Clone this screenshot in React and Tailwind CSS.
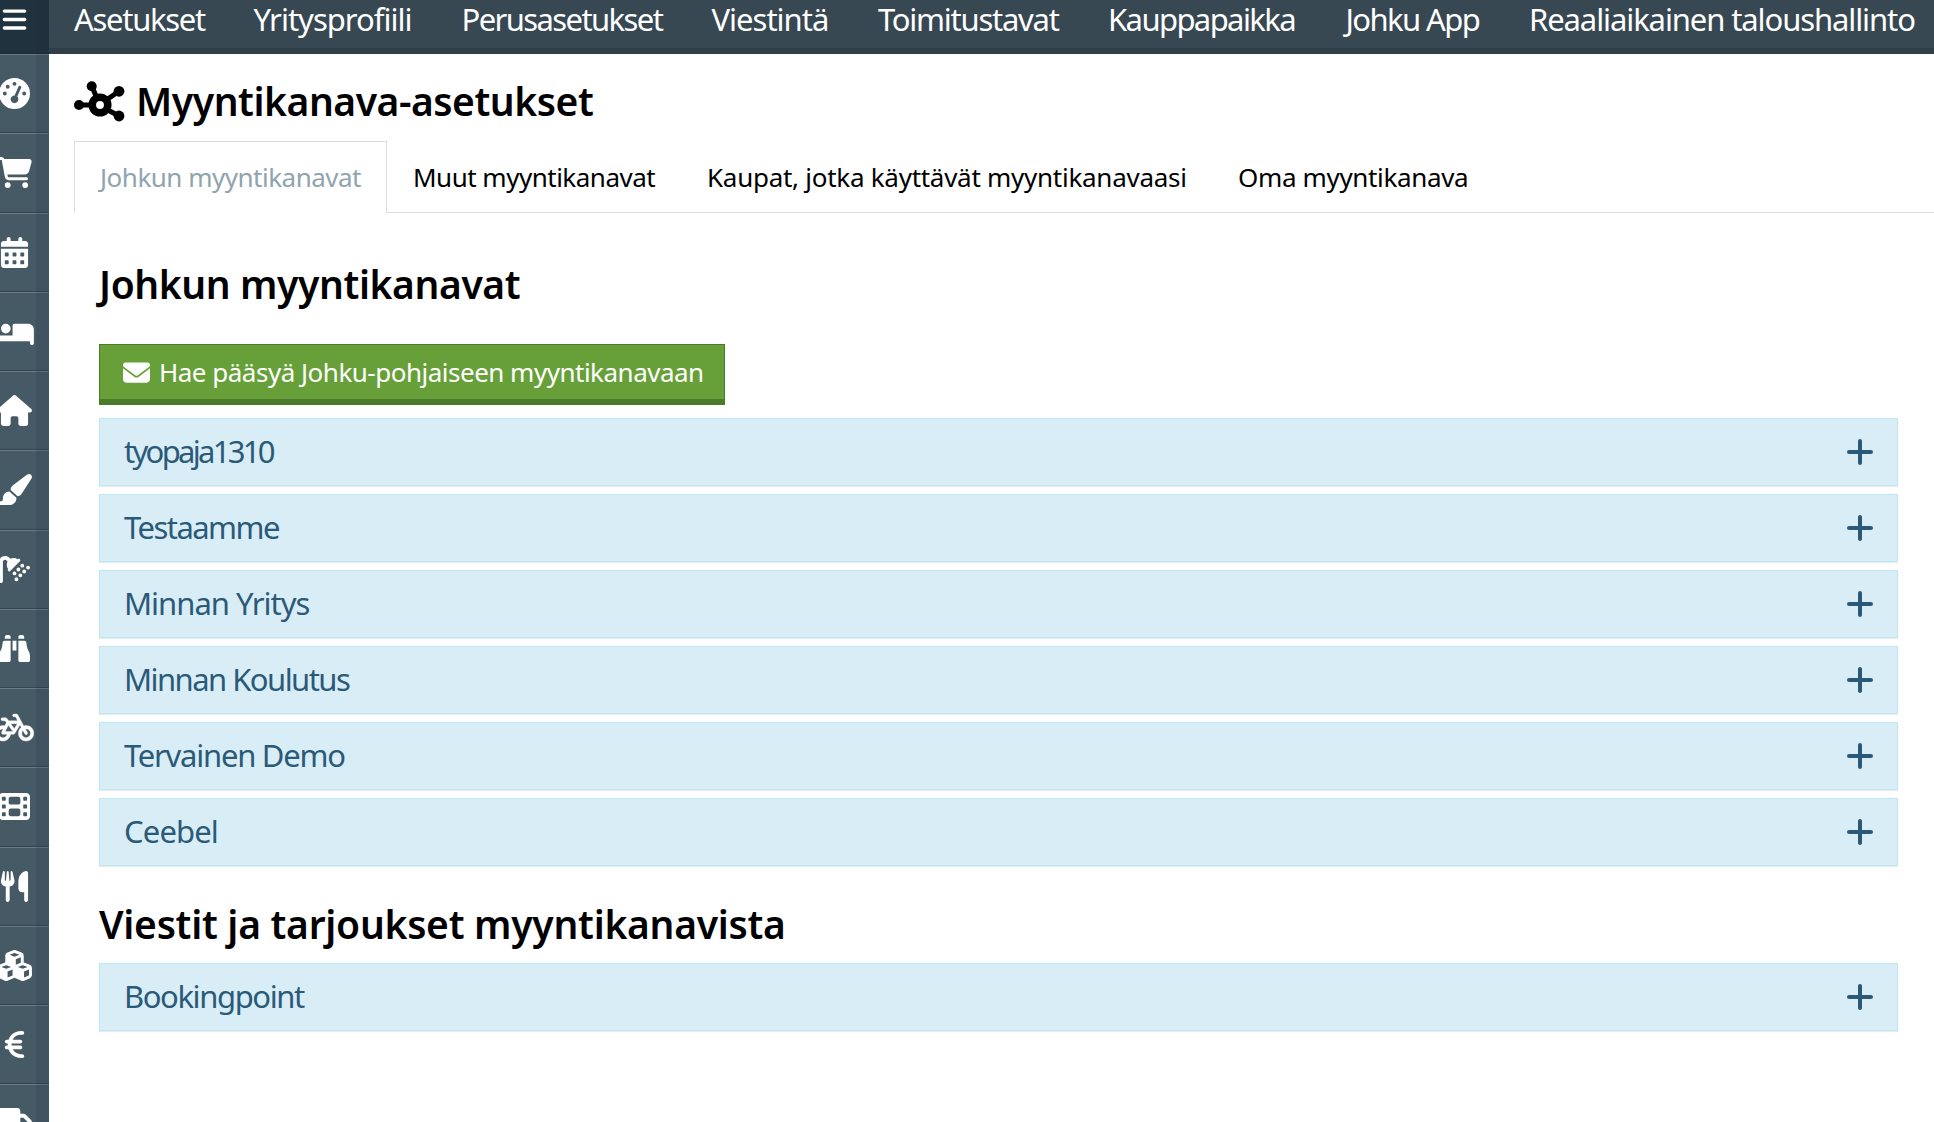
import React from 'react';
import {
  FaBars, FaGaugeHigh, FaCartShopping, FaCalendarDays, FaBed, FaHouse, FaPaintbrush, FaShower,
  FaBinoculars, FaBicycle, FaFilm, FaUtensils, FaCubes, FaEuroSign, FaTruck, FaPlus, FaEnvelope
} from 'react-icons/fa6';

const navItems = [
  { label: 'Asetukset', style: 'w-[179.5px] tracking-[-1.3px]' },
  { label: 'Yritysprofiili', style: 'w-[208px] tracking-[-1px]' },
  { label: 'Perusasetukset', style: 'w-[250px] tracking-[-1.6px]' },
  { label: 'Viestintä', style: 'w-[166.5px] tracking-[-1px]' },
  { label: 'Toimitustavat', style: 'w-[230px] tracking-[-1.25px]' },
  { label: 'Kauppapaikka', style: 'w-[237.5px] tracking-[-1.6px]' },
  { label: 'Johku App', style: 'w-[183.5px] tracking-[-1.6px]' },
  { label: 'Reaaliaikainen taloushallinto', style: 'w-[390px] tracking-[-1.1px]' },
];

const sideIcons = [
  FaGaugeHigh, FaCartShopping, FaCalendarDays, FaBed, FaHouse, FaPaintbrush, FaShower,
  FaBinoculars, FaBicycle, FaFilm, FaUtensils, FaCubes, FaEuroSign, FaTruck
];

const tabs = [
  { label: 'Johkun myyntikanavat', style: 'w-[313px] tracking-[-0.5px]', active: true },
  { label: 'Muut myyntikanavat', style: 'w-[294px] tracking-[-0.5px]' },
  { label: 'Kaupat, jotka käyttävät myyntikanavaasi', style: 'w-[531px] tracking-[-0.27px]' },
  { label: 'Oma myyntikanava', style: 'w-[290px] tracking-[-0.35px]' },
];

const channels = [
  { name: 'tyopaja1310', tracking: 'tracking-[-2.7px]' },
  { name: 'Testaamme', tracking: 'tracking-[-1.55px]' },
  { name: 'Minnan Yritys', tracking: 'tracking-[-1px]' },
  { name: 'Minnan Koulutus', tracking: 'tracking-[-1.55px]' },
  { name: 'Tervainen Demo', tracking: 'tracking-[-1.25px]' },
  { name: 'Ceebel', tracking: 'tracking-[-0.85px]' },
];

const HubIcon = () => (
  <svg viewBox="0 0 51 42" className="h-[42px] w-[51px]" fill="currentColor" stroke="currentColor">
    <circle cx="26" cy="24" r="7.75" fill="none" strokeWidth="7.600" />
    <path d="M5 24H17M17.700 5L22.500 16M45 10.300L33 18.500M45 35L33 28.500" strokeWidth="5" fill="none" />
    <g stroke="none">
      <circle cx="5" cy="24" r="5" />
      <circle cx="17.700" cy="5.200" r="5" />
      <circle cx="45" cy="10.300" r="5.400" />
      <circle cx="45" cy="35" r="5.400" />
    </g>
  </svg>
);

const Panel = ({ title, tracking }) => (
  <div className="flex h-[68px] items-center justify-between border border-[#bce8f1] bg-[#d9edf7] pl-6 pr-[23px] text-[#2a5a78] shadow-[0_1px_1px_rgba(0,0,0,0.08)]">
    <span className={`pb-0.5 text-[31px] ${tracking}`}>{title}</span>
    <FaPlus className="h-8 w-7" />
  </div>
);

const Sidebar = () => (
  <aside className="relative flex w-[49px] shrink-0 flex-col bg-[#465a65] text-white">
    <div className="flex h-[54px] shrink-0 justify-center border-b border-[#1b2b35] bg-[#20323e] pr-5 pt-[5.5px]">
      <FaBars className="h-[27px] w-[27px] shrink-0" />
    </div>
    {sideIcons.map((Icon, i) => (
      <div key={i} className="flex h-[79.25px] shrink-0 items-center justify-center border-b border-t border-b-[#34454f] border-t-[#6a7d87] pr-5">
        {/* the bicycle is drawn thinner than the rest of the set */}
        <Icon className={`h-[31px] w-[39px] shrink-0 ${Icon === FaBicycle ? 'stroke-white stroke-[6px]' : ''}`} />
      </div>
    ))}
    {/* inner edge shade */}
    <div className="absolute inset-y-0 right-0 w-[13px] bg-[#20283c]/15" />
  </aside>
);

const App = () => {
  return (
    <div className="flex h-[1122px] w-[1934px] overflow-hidden bg-white font-['Noto_Sans',sans-serif] text-black">
      <Sidebar />
      <div className="min-w-0 flex-1">
        <nav className="flex h-[54px] border-b-[6px] border-[#2f3f49] bg-[#374853] pl-[25px] text-[31px] leading-[38px] text-white">
          {navItems.map((item) => (
            <a key={item.label} className={`shrink-0 whitespace-nowrap ${item.style}`}>{item.label}</a>
          ))}
        </nav>

        <div className="pl-[25px]">
          <h1 className="flex h-[87px] items-center gap-[11px] whitespace-nowrap pt-2 text-[39px] font-semibold tracking-[-0.45px]">
            <HubIcon />
            Myyntikanava-asetukset
          </h1>

          {/* Tabs */}
          <div className="flex h-[72px] border-b border-[#dddddd] text-[26px] leading-[70px]">
            {tabs.map((tab) => (
              <a
                key={tab.label}
                className={`h-[72px] shrink-0 whitespace-nowrap border border-b-0 pl-[25px] ${tab.style} ${tab.active ? 'border-[#dddddd] bg-white text-[#90a4ae]' : 'border-transparent'}`}
              >
                {tab.label}
              </a>
            ))}
          </div>

          <div className="pl-[25px] pr-9">
            <h2 className="flex h-[131px] items-center whitespace-nowrap pt-3 text-[39px] font-semibold tracking-[-0.4px]">Johkun myyntikanavat</h2>
            <button className="mb-[13px] flex h-[61px] w-[626px] items-center gap-[9px] whitespace-nowrap border border-b-[6px] border-[#4c7a2b] bg-[#67a038] pl-[23px] text-[26px] tracking-[-0.5px] text-white">
              <FaEnvelope className="h-[27px] w-[27px]" />
              Hae pääsyä Johku-pohjaiseen myyntikanavaan
            </button>

            <div className="flex flex-col gap-2">
              {channels.map((channel) => (
                <Panel key={channel.name} title={channel.name} tracking={channel.tracking} />
              ))}
            </div>

            <h2 className="flex h-[97px] items-center whitespace-nowrap pt-5 text-[39px] font-semibold tracking-[-0.27px]">Viestit ja tarjoukset myyntikanavista</h2>
            <Panel title="Bookingpoint" tracking="tracking-[-1.4px]" />
          </div>
        </div>
      </div>
    </div>
  );
};

export default App;
